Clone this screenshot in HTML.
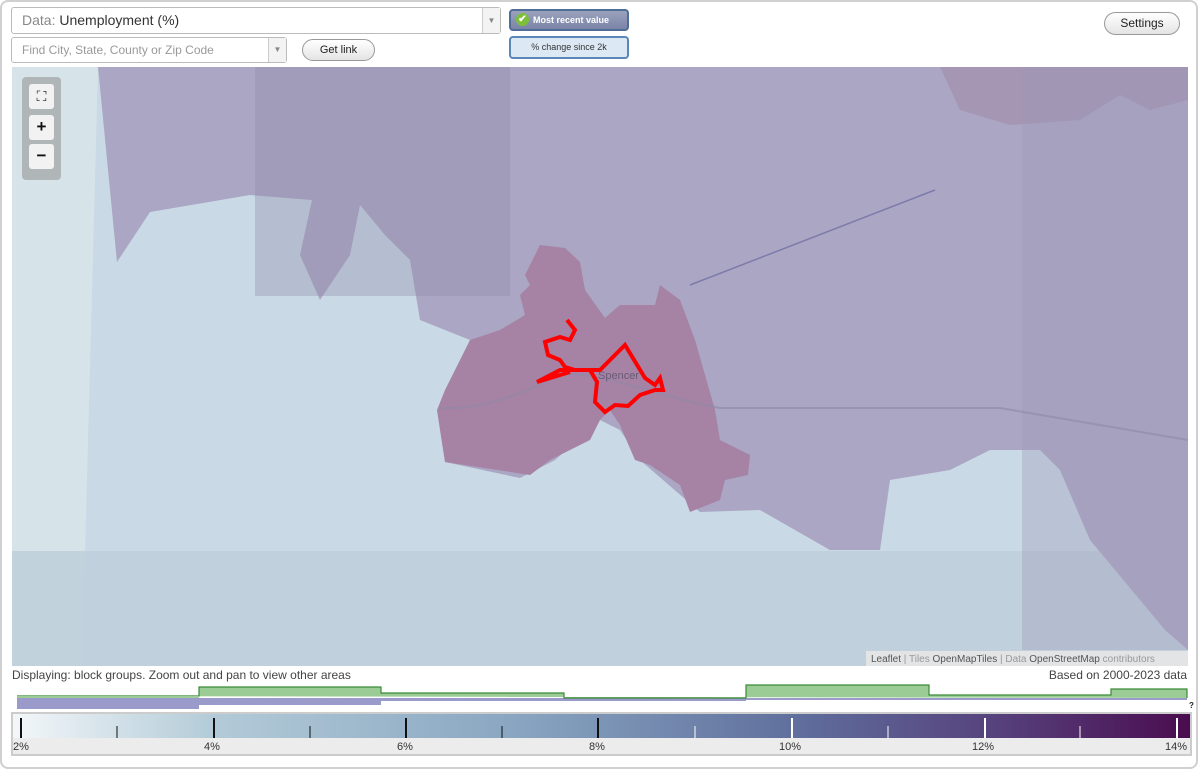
<!DOCTYPE html>
<html><head><meta charset="utf-8"><style>
*{box-sizing:border-box}
body{margin:0;width:1200px;height:771px;background:#fff;font-family:"Liberation Sans",Arial,sans-serif;overflow:hidden;position:relative}
.frame{position:absolute;left:0;top:0;width:1198px;height:769px;border:2px solid #d0d0d0;border-radius:8px;background:#fff}
.sel{position:absolute;background:#fff;border:1px solid #bbb;border-radius:3px;color:#555}
.arr{position:absolute;right:0;top:0;bottom:0;width:18px;border-left:1px solid #ccc;background:#f3f3f3;font-size:8px;color:#888;text-align:center}
.btn{position:absolute;border:1px solid #999;border-radius:12px;background:linear-gradient(#fff,#e4e4e4);font-size:11px;color:#222;text-align:center}
</style></head><body>
<div class="frame"></div>
<div class="sel" style="left:11px;top:7px;width:490px;height:27px;font-size:14px;line-height:25px;padding-left:10px"><span style="color:#888">Data:</span> <span style="color:#333">Unemployment (%)</span><div class="arr" style="line-height:25px">▼</div></div>
<div class="sel" style="left:11px;top:37px;width:276px;height:26px;font-size:12px;line-height:24px;padding-left:10px;color:#999">Find City, State, County or Zip Code<div class="arr" style="line-height:24px">▼</div></div>
<div class="btn" style="left:302px;top:39px;width:73px;height:22px;line-height:20px">Get link</div>
<div style="position:absolute;left:509px;top:9px;width:120px;height:22px;border:2px solid #4f6d96;border-radius:4px;background:linear-gradient(#9aa2bd,#7b84a6);color:#fff;font-size:9px;font-weight:bold;line-height:18px;padding-left:22px"><span style="position:absolute;left:5px;top:2px;width:13px;height:13px;border-radius:50%;background:#7cbf3a;color:#fff;font-size:10px;line-height:13px;text-align:center">✔</span>Most recent value</div>
<div style="position:absolute;left:509px;top:36px;width:120px;height:23px;border:2px solid #5a86b8;border-radius:4px;background:#dce9f5;color:#333;font-size:9px;line-height:19px;text-align:center">% change since 2k</div>
<div class="btn" style="left:1104px;top:12px;width:76px;height:23px;line-height:21px;font-size:12px">Settings</div>

<svg style="position:absolute;left:12px;top:67px" width="1176" height="599" viewBox="12 67 1176 599">
<rect x="12" y="67" width="1176" height="599" fill="#c9d9e5"/>
<polygon points="12,67 98,67 82,666 12,666" fill="#d6e4ea"/>
<rect x="12" y="551" width="1176" height="115" fill="#bfcfdc" opacity="0.9"/>
<polygon points="98,67 1188,67 1188,650 1165,630 1140,600 1090,540 1060,470 1040,450 990,450 950,470 890,480 880,550 830,550 760,510 700,512 640,460 620,430 600,420 555,460 520,478 445,462 440,420 460,380 470,340 420,320 410,260 385,235 360,205 350,255 320,300 300,255 312,200 250,195 150,212 117,262" fill="#aaa6c3"/>
<rect x="255" y="67" width="255" height="229" fill="#8e8aa8" opacity="0.35"/>
<polygon points="940,67 1188,67 1188,100 1150,110 1120,95 1080,120 1010,125 960,110" fill="#a596b4"/>
<rect x="1022" y="67" width="166" height="583" fill="#9d99b6" opacity="0.35"/>
<polygon points="540,245 565,248 580,262 585,290 605,318 620,305 655,305 660,285 680,300 695,340 715,410 720,440 750,455 748,475 725,480 720,500 690,512 680,485 650,465 635,460 620,425 610,410 600,420 590,440 550,460 530,475 445,462 440,430 437,410 445,390 470,340 500,330 525,315 520,295 530,285 525,275" fill="#a682a5"/>
<path d="M440,408 C480,410 520,395 560,375 C600,370 650,395 720,408 L1000,408 1188,440" stroke="#8e88a6" stroke-width="2" fill="none" opacity="0.6"/>
<path d="M690,285 L935,190" stroke="#7d7bab" stroke-width="1.5"/>
<polyline points="567,320 575,330 570,340 560,337 545,342 548,355 560,360 565,367 575,370 600,370 625,345 645,378 655,385 660,378 663,390 655,390 640,395 628,406 615,405 605,412 595,402 597,382 590,370 560,370 537,382 570,372" fill="none" stroke="#ff0000" stroke-width="4" stroke-linejoin="miter"/>
<text x="598" y="379" font-size="11" fill="#6a5a78" font-family="Liberation Sans">Spencer</text>
<rect x="866" y="651" width="322" height="15" fill="#e8e8e8" opacity="0.85"/>
<text x="871" y="662" font-size="10" fill="#999"><tspan fill="#555">Leaflet</tspan> | Tiles <tspan fill="#555">OpenMapTiles</tspan> | Data <tspan fill="#555">OpenStreetMap</tspan> contributors</text>
</svg>
<div style="position:absolute;left:22px;top:77px;width:39px;height:103px;background:rgba(150,150,150,0.6);border-radius:4px"></div>
<div style="position:absolute;left:29px;top:84px;width:25px;height:25px;background:#f2f2f2;border-radius:3px;font-size:14px;text-align:center;line-height:25px;color:#222">⛶</div>
<div style="position:absolute;left:29px;top:115px;width:25px;height:25px;background:#f2f2f2;border-radius:3px;font-size:17px;font-weight:bold;text-align:center;line-height:24px;color:#111">+</div>
<div style="position:absolute;left:29px;top:144px;width:25px;height:25px;background:#f2f2f2;border-radius:3px;font-size:17px;font-weight:bold;text-align:center;line-height:23px;color:#111">−</div>

<div style="position:absolute;left:12px;top:668px;font-size:12px;color:#444">Displaying: block groups. Zoom out and pan to view other areas</div>
<div style="position:absolute;right:13px;top:668px;font-size:12px;color:#444">Based on 2000-2023 data</div>
<svg style="position:absolute;left:0;top:680px" width="1200" height="32">
<g fill="#9a9bcb"><rect x="17" y="18" width="182" height="11"/><rect x="199" y="18" width="182" height="7"/><rect x="381" y="18" width="365" height="3"/><rect x="746" y="18" width="441" height="2"/></g>
<path d="M17,16 H199 V7 H381 V13 H564 V18 H746 V5 H929 V15 H1111 V9 H1187 V18" fill="#9ccc96" stroke="#3a8a36" stroke-width="1.2"/>
<rect x="17" y="16" width="182" height="2" fill="#9ccc96"/>
<text x="1189" y="28" font-size="8" font-weight="bold" fill="#222">?</text>
</svg>
<div style="position:absolute;left:11px;top:712px;width:1181px;height:44px;border:2px solid #ccc;background:#ececec"></div>
<div style="position:absolute;left:13px;top:714px;width:1177px;height:24px;background:linear-gradient(90deg,#f3f7f9 0%,#b3cbd8 17%,#8aa7c2 42%,#5f6e9c 67%,#56407b 84%,#4a0c4f 100%)"></div>
<svg style="position:absolute;left:0;top:714px" width="1200" height="40">
<g stroke="#111" stroke-width="2"><line x1="21" y1="4" x2="21" y2="24"/><line x1="214" y1="4" x2="214" y2="24"/><line x1="406" y1="4" x2="406" y2="24"/><line x1="598" y1="4" x2="598" y2="24"/></g>
<g stroke="#111" stroke-width="1"><line x1="117" y1="12" x2="117" y2="24"/><line x1="310" y1="12" x2="310" y2="24"/><line x1="502" y1="12" x2="502" y2="24"/></g>
<g stroke="#fff" stroke-width="2"><line x1="792" y1="4" x2="792" y2="24"/><line x1="985" y1="4" x2="985" y2="24"/><line x1="1177" y1="4" x2="1177" y2="24"/></g>
<g stroke="#fff" stroke-width="1"><line x1="695" y1="12" x2="695" y2="24"/><line x1="888" y1="12" x2="888" y2="24"/><line x1="1080" y1="12" x2="1080" y2="24"/></g>
<g font-size="11" fill="#333" font-family="Liberation Sans"><text x="13" y="36">2%</text><text x="204" y="36">4%</text><text x="397" y="36">6%</text><text x="589" y="36">8%</text><text x="779" y="36">10%</text><text x="972" y="36">12%</text><text x="1165" y="36">14%</text></g>
</svg>
</body></html>
